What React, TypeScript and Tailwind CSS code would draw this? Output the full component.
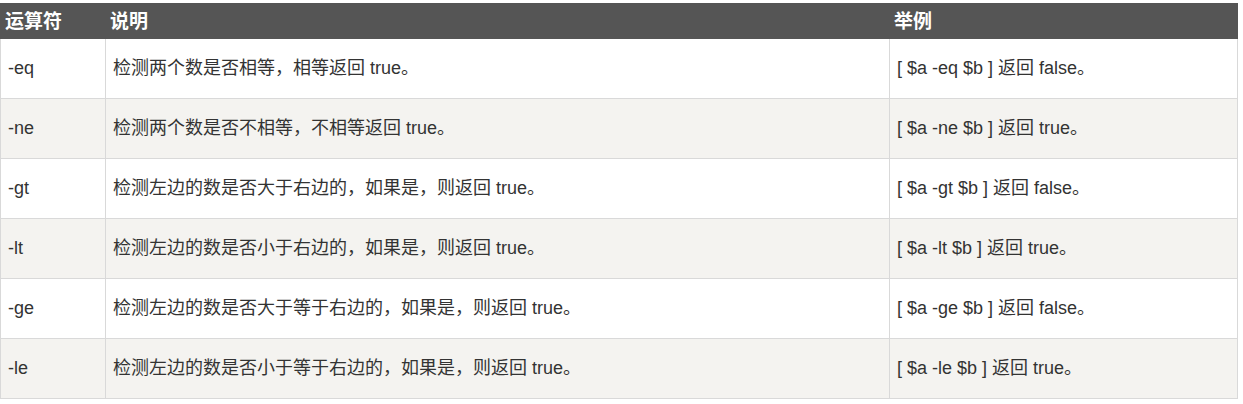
import React from "react";

const rows = [
  { op: "-eq", desc: "检测两个数是否相等，相等返回 true。", ex: "[ $a -eq $b ] 返回 false。" },
  { op: "-ne", desc: "检测两个数是否不相等，不相等返回 true。", ex: "[ $a -ne $b ] 返回 true。" },
  { op: "-gt", desc: "检测左边的数是否大于右边的，如果是，则返回 true。", ex: "[ $a -gt $b ] 返回 false。" },
  { op: "-lt", desc: "检测左边的数是否小于右边的，如果是，则返回 true。", ex: "[ $a -lt $b ] 返回 true。" },
  { op: "-ge", desc: "检测左边的数是否大于等于右边的，如果是，则返回 true。", ex: "[ $a -ge $b ] 返回 false。" },
  { op: "-le", desc: "检测左边的数是否小于等于右边的，如果是，则返回 true。", ex: "[ $a -le $b ] 返回 true。" },
];

export default function App() {
  return (
    <div className="bg-white pt-[3px] font-['Liberation_Sans','Noto_Sans_CJK_SC',sans-serif]">
      <table className="w-[1237px] border-collapse table-fixed text-[18px]">
        <colgroup>
          <col className="w-[105px]" />
          <col className="w-[784px]" />
          <col className="w-[348px]" />
        </colgroup>
        <thead>
          <tr className="h-[35px] bg-[#555555] text-white">
            <th className="border border-[#555555] px-[4px] text-left text-[19px] font-bold leading-none">运算符</th>
            <th className="border border-[#555555] px-[4px] text-left text-[19px] font-bold leading-none">说明</th>
            <th className="border border-[#555555] px-[4px] text-left text-[19px] font-bold leading-none">举例</th>
          </tr>
        </thead>
        <tbody className="text-[#333333]">
          {rows.map((r, i) => (
            <tr key={r.op} className={`h-[60px] ${i % 2 === 1 ? "bg-[#f4f3f0]" : "bg-white"}`}>
              <td className="border border-[#d9d9d9] px-[7px]">{r.op}</td>
              <td className="border border-[#d9d9d9] px-[7px]">{r.desc}</td>
              <td className="border border-[#d9d9d9] px-[7px]">{r.ex}</td>
            </tr>
          ))}
        </tbody>
      </table>
    </div>
  );
}
